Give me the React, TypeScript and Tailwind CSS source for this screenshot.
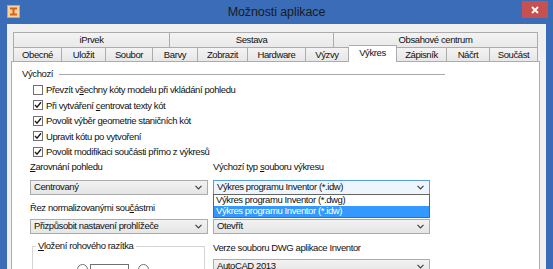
import React from "react"

interface Tab {
  label: string
  w: number
}

const topTabs: Tab[] = [
  { label: "iPrvek", w: 157 },
  { label: "Sestava", w: 164 },
  { label: "Obsahové centrum", w: 204 },
]

const bottomTabs: Tab[] = [
  { label: "Obecné", w: 49 },
  { label: "Uložit", w: 44 },
  { label: "Soubor", w: 47 },
  { label: "Barvy", w: 45 },
  { label: "Zobrazit", w: 50 },
  { label: "Hardware", w: 58 },
  { label: "Výzvy", w: 43 },
  { label: "Výkres", w: 48 },
  { label: "Zápisník", w: 50 },
  { label: "Náčrt", w: 43 },
  { label: "Součást", w: 48 },
]

const options = [
  { checked: false, text: <>Převzít v<u>š</u>echny kóty modelu při vkládání pohledu</> },
  { checked: true, text: <>Při vytváření <u>c</u>entrovat texty kót</> },
  { checked: true, text: <>Povolit výběr <u>g</u>eometrie staničních kót</> },
  { checked: true, text: <>Upravit kótu po vytvoření</> },
  { checked: true, text: <>Povolit modifikaci součásti přímo z výkresů</> },
]

function Chevron() {
  return (
    <svg width="7" height="5" viewBox="0 0 7 5" className="shrink-0">
      <polyline points="0.5,0.8 3.5,3.8 6.5,0.8" fill="none" stroke="#404040" strokeWidth="1.2" />
    </svg>
  )
}

function Select({ value, focused }: { value: string; focused?: boolean }) {
  return (
    <div
      className={
        focused
          ? "flex h-[15px] items-center justify-between border border-[#569de5] bg-[#eef5fc] pl-[3px] pr-[5px]"
          : "flex h-[15px] items-center justify-between border border-[#acacac] bg-gradient-to-b from-[#f2f2f2] to-[#e5e5e5] pl-[3px] pr-[5px]"
      }
    >
      <span className="leading-none">{value}</span>
      <Chevron />
    </div>
  )
}

function Checkbox({ checked }: { checked: boolean }) {
  return (
    <div className="flex h-[10px] w-[10px] shrink-0 items-center justify-center border border-[#707070] bg-white">
      {checked && (
        <svg width="8" height="8" viewBox="0 0 8 8">
          <polyline points="1,4 3,6.2 7,1.2" fill="none" stroke="#1f1f1f" strokeWidth="1.4" />
        </svg>
      )}
    </div>
  )
}

function AppIcon() {
  return (
    <svg width="13" height="13" viewBox="0 0 13 13">
      <rect x="0.5" y="0.5" width="12" height="12" fill="#f6d49a" stroke="#e0a050" />
      <rect x="3" y="2.5" width="7" height="2" fill="#d9601c" />
      <rect x="5.5" y="4" width="2" height="5" fill="#d9601c" />
      <rect x="3" y="8.5" width="7" height="2" fill="#d9601c" />
    </svg>
  )
}

export default function App() {
  return (
    <div className="flex h-[269px] w-[553px] flex-col overflow-hidden bg-[#3a6cb8] font-['Liberation_Sans',Arial,sans-serif] text-[9.5px] tracking-[-0.4px] text-[#111]">
      {/* Title bar */}
      <div className="grid h-[24px] shrink-0 grid-cols-[60px_1fr_60px] items-start">
        <div className="pl-[7px] pt-[5px]">
          <AppIcon />
        </div>
        <div className="pt-[4px] text-center text-[12.5px] leading-[16px] tracking-[-0.1px] text-[#1b1b1b]">Možnosti aplikace</div>
        <div className="flex justify-end pr-[5px] pt-[1px]">
          <div className="flex h-[17px] w-[26px] items-center justify-center bg-[#c75050]">
            <svg width="8" height="8" viewBox="0 0 8 8">
              <path d="M1 1 L7 7 M7 1 L1 7" stroke="white" strokeWidth="1.8" />
            </svg>
          </div>
        </div>
      </div>

      {/* Client area */}
      <div className="mx-[7px] flex flex-1 flex-col bg-[#f0f0f0] pl-[4px] pt-[8px]">
        {/* Tab rows */}
        <div className="ml-[2px] flex h-[15px]">
          {topTabs.map((t, i) => (
            <div
              key={t.label}
              style={{ width: t.w }}
              className={
                (i === 0 ? "border-l " : "") +
                "flex items-center justify-center border-r border-t border-[#acacac] bg-gradient-to-b from-[#f3f3f3] to-[#e9e9e9] leading-none"
              }
            >
              {t.label}
            </div>
          ))}
        </div>
        <div className="relative z-10 ml-[2px] flex h-[14px]">
          {bottomTabs.map((t, i) =>
            t.label === "Výkres" ? (
              <div
                key={t.label}
                style={{ width: t.w }}
                className="relative -top-[2px] flex h-[17px] items-start justify-center border-r border-t border-[#acacac] bg-white pt-[2px] leading-none"
              >
                {t.label}
              </div>
            ) : (
              <div
                key={t.label}
                style={{ width: t.w }}
                className={
                  (i === 0 ? "border-l " : "") +
                  "flex items-center justify-center border-r border-t border-[#acacac] bg-gradient-to-b from-[#f3f3f3] to-[#e7e7e7] leading-none"
                }
              >
                {t.label}
              </div>
            )
          )}
        </div>

        {/* Panel */}
        <div className="flex w-[529px] flex-1 flex-col border border-b-0 border-[#acacac] bg-white pl-[10px]">
          {/* Výchozí group */}
          <div className="mt-[6px] flex h-[12px] items-center">
            <span className="leading-none">Výchozí</span>
            <div className="ml-[6px] h-px w-[386px] bg-[#a9a9a9]" />
          </div>
          <div className="mt-[2px] flex flex-col pl-[11px]">
            {options.map((o, i) => (
              <div key={i} className="flex h-[15.5px] items-center gap-[3px]">
                <Checkbox checked={o.checked} />
                <span className="leading-none">{o.text}</span>
              </div>
            ))}
          </div>

          {/* Two columns */}
          <div className="mt-[1px] flex gap-[5px] pl-[8px]">
            <div className="flex w-[178px] flex-col">
              <div className="flex h-[12px] items-center leading-none"><span><u>Z</u>arovnání pohledu</span></div>
              <div className="mt-[7px]"><Select value="Centrovaný" /></div>
              <div className="mt-[7px] flex h-[12px] items-center leading-none"><span>Řez normalizovanými sou<u>č</u>ástmi</span></div>
              <div className="mt-[5px]"><Select value="Přizpůsobit nastavení prohlížeče" /></div>
              <div className="ml-[2px] mt-[12px] h-[40px] w-[173px] border border-[#d5d5d5]">
                <div className="-mt-[7px] ml-[3px] w-fit bg-white px-[2px] leading-[12px]"><u>V</u>ložení rohového razítka</div>
                <div className="mt-[12px] flex items-center pl-[44px]">
                  <div className="h-[11px] w-[11px] rounded-full border border-[#707070] bg-white" />
                  <div className="ml-[2px] h-[12px] w-[39px] border border-[#707070] bg-white" />
                  <div className="ml-[9px] h-[11px] w-[11px] rounded-full border border-[#707070] bg-white" />
                </div>
              </div>
            </div>
            <div className="relative flex w-[217px] flex-col">
              <div className="flex h-[12px] items-center leading-none"><span>Výchozí typ <u>s</u>ouboru výkresu</span></div>
              <div className="mt-[7px]"><Select value="Výkres programu Inventor (*.idw)" focused /></div>
              <div className="mt-[7px] h-[12px]" />
              <div className="mt-[5px]"><Select value="Otevřít" /></div>
              <div className="mt-[8px] flex h-[12px] items-center leading-none"><span>Verze souboru DWG aplikace Inventor</span></div>
              <div className="mt-[5px]"><Select value="AutoCAD 2013" /></div>

              {/* Open dropdown list */}
              <div className="absolute left-0 top-[33px] z-20 w-[217px] border border-[#646464] bg-white">
                <div className="flex h-[11px] items-center pl-[2px] leading-none">Výkres programu Inventor (*.dwg)</div>
                <div className="flex h-[11px] items-center bg-[#3399ff] pl-[2px] leading-none text-white">Výkres programu Inventor (*.idw)</div>
              </div>
            </div>
          </div>
        </div>
      </div>
    </div>
  )
}
